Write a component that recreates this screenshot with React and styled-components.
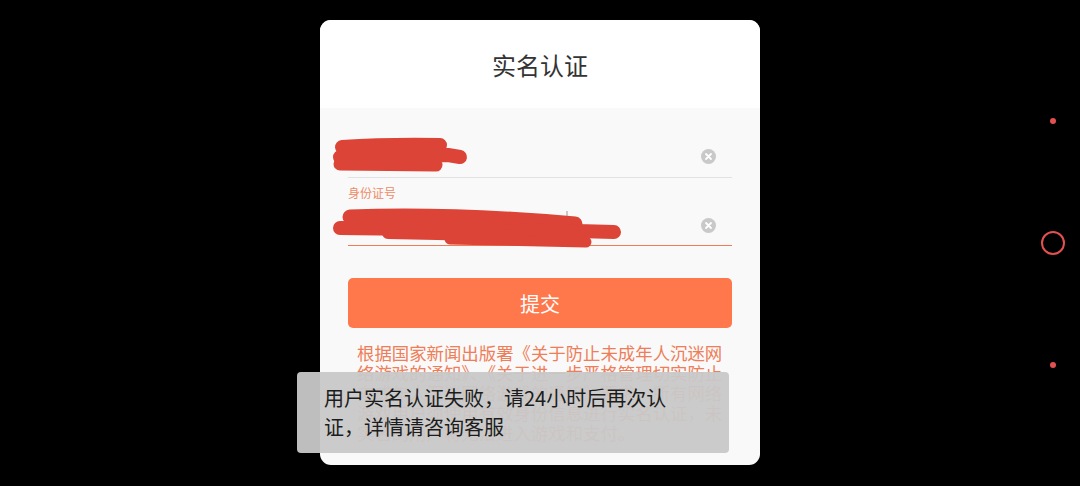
import React from 'react';
import styled, { createGlobalStyle } from 'styled-components';

const GlobalStyle = createGlobalStyle`
    html, body {
        margin: 0;
        padding: 0;
        background: #000;
    }
    body {
        font-family: "Noto Sans CJK SC", "Noto Sans", sans-serif;
    }
`;

const Screen = styled.div`
    position: relative;
    width: 1080px;
    height: 486px;
    display: grid;
    grid-template-columns: 1fr 440px 1fr;
    background: #000;
    overflow: hidden;
`;

const Modal = styled.div`
    grid-column: 2;
    margin-top: 20px;
    height: 445px;
    display: flex;
    flex-direction: column;
    border-radius: 11px;
    overflow: hidden;
    background: #f9f9f9;
`;

const Header = styled.div`
    height: 88px;
    flex-shrink: 0;
    display: flex;
    align-items: center;
    justify-content: center;
    background: #fff;
    color: #333;
    font-size: 24px;
`;

const Body = styled.div`
    display: flex;
    flex-direction: column;
    padding: 0 28px;
`;

const Field = styled.div`
    position: relative;
    height: ${p => p.$h}px;
    margin-top: ${p => p.$top || 0}px;
    display: flex;
    align-items: center;
    justify-content: flex-end;
    padding-right: 16px;
    border-bottom: 1px solid ${p => (p.$active ? '#f07c55' : '#e2e2e2')};
`;

const Label = styled.div`
    margin: 8px 0 5px;
    font-size: 12px;
    line-height: 14px;
    color: #ee8a66;
`;

const Scribble = styled.svg`
    position: absolute;
    left: -20px;
    top: 0;
    overflow: visible;
`;

const SubmitButton = styled.button`
    margin-top: 32px;
    height: 50px;
    border: none;
    border-radius: 5px;
    background: #ff784c;
    color: #fff;
    font-family: inherit;
    font-size: 20px;
`;

const Notice = styled.p`
    margin: 15px 9px 0;
    font-size: 17.4px;
    line-height: 20px;
    color: #ef7d58;
`;

const Rail = styled.div`
    grid-column: 3;
    justify-self: end;
    margin-right: 15px;
    width: 24px;
    display: flex;
    flex-direction: column;
    align-items: center;
    padding-top: 118px;
    gap: 107px;
`;

const Dot = styled.div`
    width: 6px;
    height: 6px;
    border-radius: 50%;
    background: #e2504f;
`;

const Ring = styled.div`
    width: 20px;
    height: 20px;
    border-radius: 50%;
    border: 2px solid #e2504f;
`;

const Toast = styled.div`
    position: absolute;
    left: 297px;
    top: 372px;
    width: 432px;
    box-sizing: border-box;
    padding: 11px 27px 12px;
    border-radius: 4px;
    background: rgba(200, 200, 200, 0.95);
    color: #1c1c1c;
    font-size: 20px;
    line-height: 29px;
`;

function ClearIcon() {
    return (
        <svg width="15" height="15" viewBox="0 0 15 15">
            <circle cx="7.5" cy="7.5" r="7.5" fill="#c9c9c9" />
            <path d="M5 5 L10 10 M10 5 L5 10" stroke="#fff" strokeWidth="1.8" strokeLinecap="round" />
        </svg>
    );
}

const ink = { fill: 'none', stroke: '#dc4437', strokeLinecap: 'round', strokeLinejoin: 'round' };

export default function App() {
    return (
        <>
            <GlobalStyle />
            <Screen>
                <Modal>
                    <Header>实名认证</Header>
                    <Body>
                        <Field $h={42} $top={27}>
                            <Scribble width="160" height="42">
                                <path d="M14 12 Q60 9 112 10" {...ink} strokeWidth="14" />
                                <path d="M12 22 L120 20 L132 22" {...ink} strokeWidth="14" />
                                <path d="M12 29 L108 30" {...ink} strokeWidth="13" />
                            </Scribble>
                            <ClearIcon />
                        </Field>
                        <Label>身份证号</Label>
                        <Field $h={40} $active>
                            <Scribble width="300" height="48">
                                <path d="M239 6 L239 16" stroke="#999" strokeWidth="1" />
                                <path d="M22 12 Q120 8 247 19" {...ink} strokeWidth="15" />
                                <path d="M12 23 Q130 24 286 27" {...ink} strokeWidth="14" />
                                <path d="M60 28 L200 31" {...ink} strokeWidth="12" />
                                <path d="M122 34 L258 37" {...ink} strokeWidth="11" />
                            </Scribble>
                            <ClearIcon />
                        </Field>
                        <SubmitButton>提交</SubmitButton>
                        <Notice>
                            根据国家新闻出版署《关于防止未成年人沉迷网络游戏的通知》、《关于进一步严格管理切实防止未成年人沉迷网络游戏的通知》要求，所有网络游戏用户须使用有效身份信息进行实名认证，未实名的用户将无法进入游戏和支付。
                        </Notice>
                    </Body>
                </Modal>
                <Rail>
                    <Dot />
                    <Ring />
                    <Dot />
                </Rail>
                <Toast>用户实名认证失败，请24小时后再次认证，详情请咨询客服</Toast>
            </Screen>
        </>
    );
}
